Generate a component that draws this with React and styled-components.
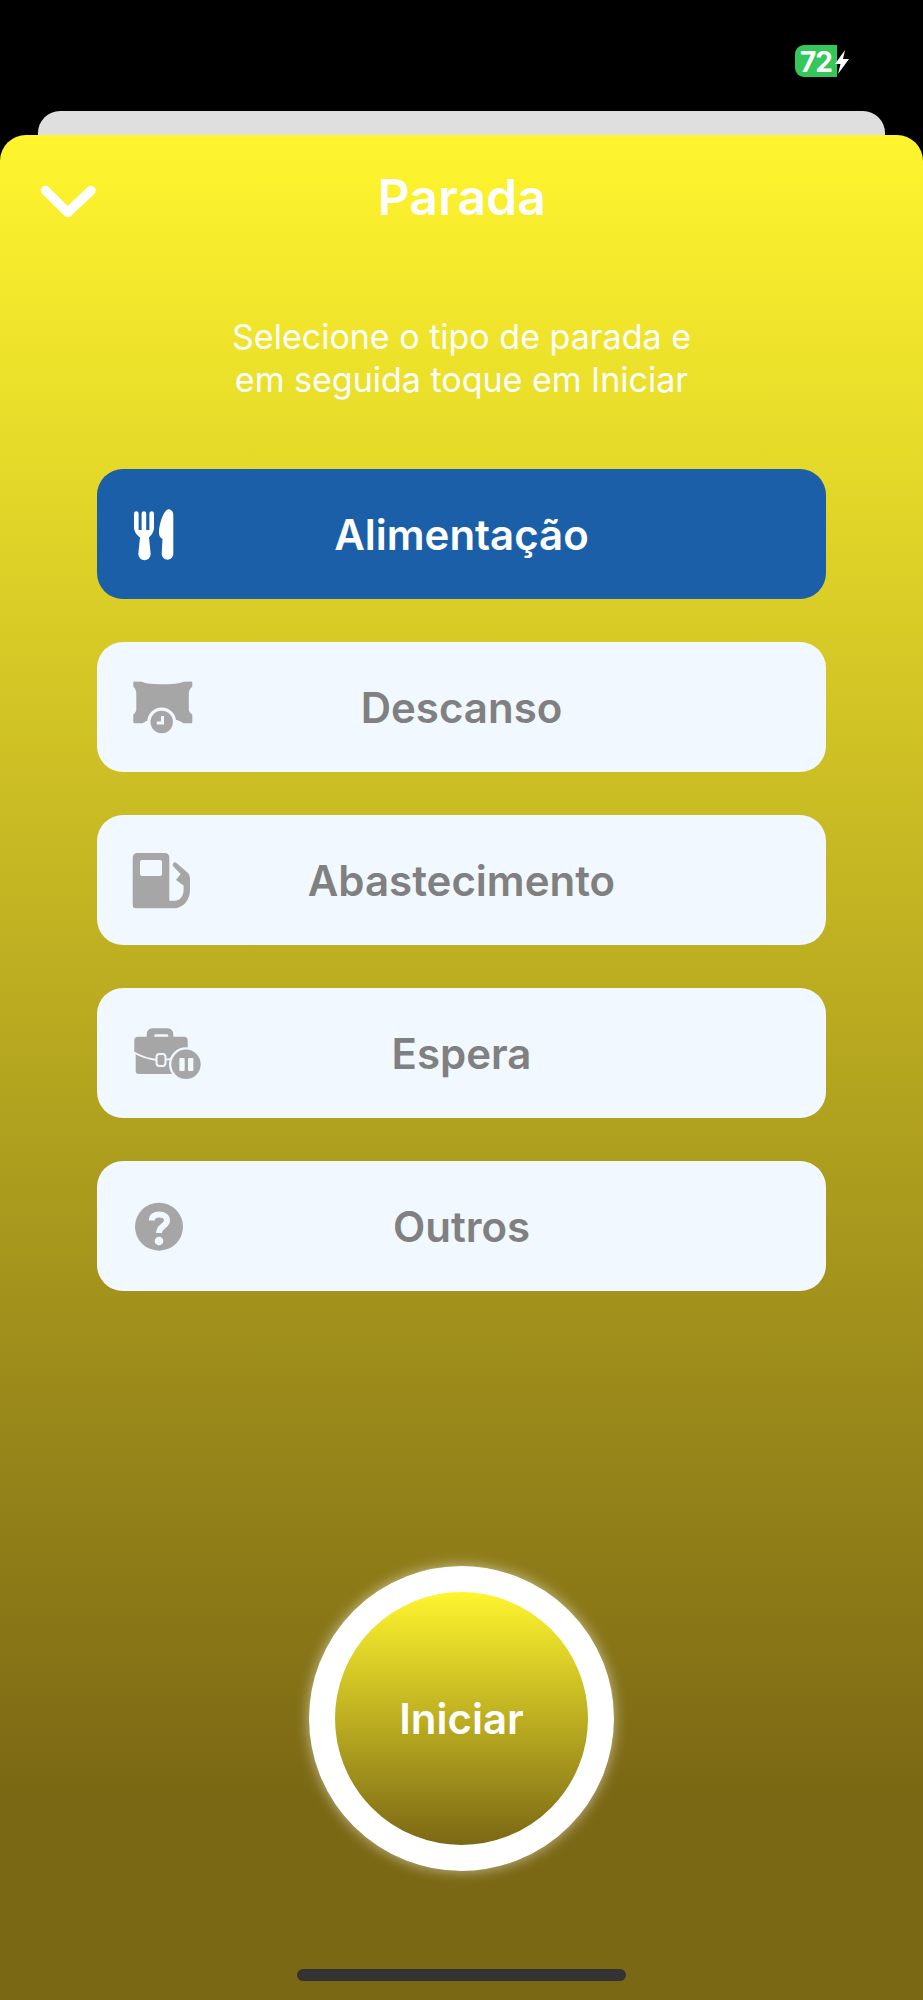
import React from 'react';
import styled, { createGlobalStyle } from 'styled-components';

const GlobalStyle = createGlobalStyle`
  html, body {
    margin: 0;
    padding: 0;
    background: #000;
    font-family: Inter, "Liberation Sans", sans-serif;
  }
`;

const Screen = styled.div`
  width: 923px;
  height: 2000px;
  display: flex;
  flex-direction: column;
  overflow: hidden;
  background: #000;
`;

const StatusBar = styled.div`
  height: 111px;
  box-sizing: border-box;
  padding: 45px 74px 0 0;
  display: flex;
  justify-content: flex-end;
  align-items: flex-start;
`;

const Battery = styled.div`
  width: 42px;
  height: 32px;
  border-radius: 9px 0 0 9px;
  background: #34c759;
  color: #fff;
  font-size: 28px;
  font-weight: 700;
  letter-spacing: -1px;
  line-height: 34px;
  text-align: center;
`;

const BoltIcon = styled.svg`
  width: 14px;
  height: 24px;
  margin: 5px 0 0 -2px;
`;

const BehindCard = styled.div`
  height: 24px;
  margin: 0 38px;
  border-radius: 22px 22px 0 0;
  background: #dfdfdf;
`;

const Sheet = styled.div`
  flex: 1;
  display: flex;
  flex-direction: column;
  align-items: center;
  border-radius: 26px 26px 0 0;
  background: linear-gradient(180deg, #fff52e 0%, #7b6814 89%, #7b6814 100%);
`;

const Header = styled.div`
  width: 100%;
  height: 124px;
  display: grid;
  grid-template-columns: 1fr auto 1fr;
  align-items: center;
`;

const BackIcon = styled.svg`
  width: 60px;
  height: 37px;
  margin-left: 38px;
  overflow: visible;
`;

const Title = styled.h1`
  margin: 0;
  color: #fff;
  font-size: 50px;
  font-weight: 600;
  line-height: 56px;
`;

const Intro = styled.p`
  margin: 56px 0 0;
  color: #fff;
  font-size: 34px;
  font-weight: 400;
  line-height: 43px;
  text-align: center;
`;

const StopList = styled.div`
  width: 729px;
  margin-top: 68px;
  display: flex;
  flex-direction: column;
  gap: 43px;
`;

const StopButton = styled.div`
  height: 130px;
  box-sizing: border-box;
  padding: 0 31px;
  display: grid;
  grid-template-columns: 1fr auto 1fr;
  align-items: center;
  border-radius: 26px;
  background: ${(p) => (p.$active ? '#1a5fa8' : '#f1f8ff')};
  color: ${(p) => (p.$active ? '#fff' : '#808080')};
  font-size: 42px;
  font-weight: 600;
`;

const IconSlot = styled.svg`
  display: block;
  width: 76px;
  height: 64px;
  overflow: visible;
`;

const StartRing = styled.div`
  width: 305px;
  height: 305px;
  box-sizing: border-box;
  margin-top: 275px;
  border: 26px solid #fff;
  border-radius: 50%;
  display: flex;
  align-items: center;
  justify-content: center;
  background: linear-gradient(180deg, #fff52e 0%, #7b6814 100%);
  background-origin: padding-box;
  box-shadow: 0 0 14px rgba(255, 255, 255, 0.55);
  color: #fff;
  font-size: 42px;
  font-weight: 600;
`;

const HomeBar = styled.div`
  width: 329px;
  height: 12px;
  margin-top: 98px;
  border-radius: 6px;
  background: #333;
`;

const GRAY = '#a6a6a6';
const PAPER = '#f1f8ff';

const MealIcon = () => (
  <IconSlot viewBox="0 0 76 64">
    <path
      fill="#fff"
      d="M6 11.5a2.3 2.3 0 0 1 4.6 0V28h3V11.5a2.3 2.3 0 0 1 4.6 0V28h3.2V11.5a2.3 2.3 0 0 1 4.6 0V25c0 5-2.5 8-5 10.5L22.7 52a6.2 6.2 0 0 1-12.4 0l1.7-16.5C9 33 6 30 6 25Z"
    />
    <path
      fill="#fff"
      d="M45.3 13C45.3 9.5 43 7.3 40.5 7.3 36 7.3 31 22 31 31c0 3 1.5 5 3.5 6L33.7 52a5.8 5.8 0 0 0 11.6 0Z"
    />
  </IconSlot>
);

const RestIcon = () => (
  <IconSlot viewBox="0 0 76 64">
    <path
      fill={GRAY}
      d="M5.300 7.500Q5.300 6.500 6.500 6.500L14 6.700Q17 9 32 9.300T56 6.700L63 6.500Q64.300 6.500 64.300 7.500V11.500Q60.800 14 60.800 19V35Q60.800 37 64.300 39.500V47Q64.300 48.300 63 48.300H55.500Q52 46 48.700 45H21Q18 46 14.500 48.300H6.500Q5.300 48.300 5.300 47V39.500Q8.300 37 8.300 35V19Q8.300 14 5.300 11.500Z"
    />
    <circle cx="33.700" cy="47" r="14.500" fill={PAPER} />
    <circle cx="33.700" cy="47" r="11.200" fill={GRAY} />
    <path d="M34.500 41v7h-5.700" fill="none" stroke={PAPER} strokeWidth="3" />
  </IconSlot>
);

const FuelIcon = () => (
  <IconSlot viewBox="0 0 76 64">
    <path
      fill={GRAY}
      fillRule="evenodd"
      d="M4.700 9.500A4.500 4.500 0 0 1 9.200 5H37a4.300 4.300 0 0 1 4.300 4.300v43.400H47c5 0 8.600-4.700 8.600-10.700v-4.500L48 32l4.600-6-7.100-7.500a2.300 2.300 0 0 1 3-3.500L60 25q2 2 2 5v12c0 10-7 18.300-16 18.300H8a3.300 3.300 0 0 1-3.300-3.300ZM12 14a2 2 0 0 1 2-2h18a2 2 0 0 1 2 2v12a2 2 0 0 1-2 2H14a2 2 0 0 1-2-2Z"
    />
  </IconSlot>
);

const WaitIcon = () => (
  <IconSlot viewBox="0 0 76 64">
    <path
      fill={GRAY}
      fillRule="evenodd"
      d="M18.700 15.700v-3a5.400 5.400 0 0 1 5.400-5.400h15.800a5.400 5.400 0 0 1 5.400 5.400v3H56a3.700 3.700 0 0 1 3.700 3.700V50a3 3 0 0 1-3 3H11a3.300 3.300 0 0 1-3.300-3.300V33.500L6.300 32V19.400A3.700 3.700 0 0 1 10 15.700ZM26.300 15.700h14v-1a1.400 1.400 0 0 0-1.400-1.400H27.700a1.400 1.400 0 0 0-1.400 1.400Z"
    />
    <path d="M6 31.500C13 35.500 21 38 29 39M36 39c9-1 17-3 25-7.500" fill="none" stroke={PAPER} strokeWidth="2" />
    <rect x="28.500" y="33" width="9" height="12" rx="3" fill={GRAY} stroke={PAPER} strokeWidth="2" />
    <circle cx="58" cy="43.300" r="17" fill={PAPER} />
    <circle cx="58" cy="43.300" r="14.700" fill={GRAY} />
    <rect x="51.300" y="37" width="5.400" height="13" rx="1" fill={PAPER} />
    <rect x="60" y="37" width="5.400" height="13" rx="1" fill={PAPER} />
  </IconSlot>
);

const OtherIcon = () => (
  <IconSlot viewBox="0 0 76 64">
    <circle cx="31" cy="32.700" r="24" fill={GRAY} />
    <path
      d="M23.800 26.500C23.800 22.500 27 20.500 31 20.500c5 0 8 2.500 8 6 0 5.500-8 5.500-8 12.500"
      fill="none"
      stroke={PAPER}
      strokeWidth="6"
    />
    <circle cx="31" cy="47" r="4.300" fill={PAPER} />
  </IconSlot>
);

const stops = [
  { label: 'Alimentação', Icon: MealIcon, active: true },
  { label: 'Descanso', Icon: RestIcon },
  { label: 'Abastecimento', Icon: FuelIcon },
  { label: 'Espera', Icon: WaitIcon },
  { label: 'Outros', Icon: OtherIcon },
];

const App = () => (
  <Screen>
    <GlobalStyle />
    <StatusBar>
      <Battery>72</Battery>
      <BoltIcon viewBox="0 0 14 24">
        <path d="M10 0 0 14h5.500L3 24 14 9H8Z" fill="#fff" />
      </BoltIcon>
    </StatusBar>
    <BehindCard />
    <Sheet>
      <Header>
        <BackIcon viewBox="0 0 60 37">
          <path d="M7.500 11.500 29.700 33.500 53 11.500" fill="none" stroke="#fff" strokeWidth="9.500" strokeLinecap="round" strokeLinejoin="round" />
        </BackIcon>
        <Title>Parada</Title>
      </Header>
      <Intro>
        Selecione o tipo de parada e
        <br />
        em seguida toque em Iniciar
      </Intro>
      <StopList>
        {stops.map(({ label, Icon, active }) => (
          <StopButton key={label} $active={active}>
            <Icon />
            <span>{label}</span>
          </StopButton>
        ))}
      </StopList>
      <StartRing>Iniciar</StartRing>
      <HomeBar />
    </Sheet>
  </Screen>
);

export default App;
